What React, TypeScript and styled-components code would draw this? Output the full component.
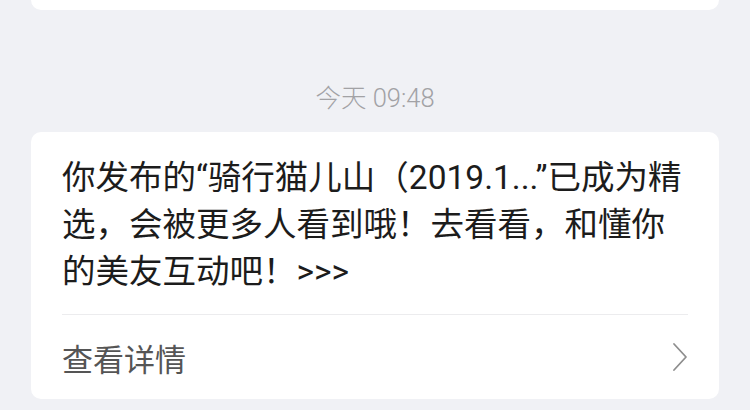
import React from 'react'
import styled, { createGlobalStyle } from 'styled-components'

const GlobalStyle = createGlobalStyle`
html, body {
  margin: 0;
  padding: 0;
  background-color: #f0f1f5;
  font-family: Roboto, "Noto Sans CJK SC", sans-serif;
}
`

const Page = styled.div`
width: 750px;
height: 410px;
overflow: hidden;
padding: 0 31px;
box-sizing: border-box;
display: flex;
flex-direction: column;
`

const PrevCard = styled.div`
height: 10px;
background-color: #ffffff;
border-radius: 0 0 10px 10px;
`

const Time = styled.div`
margin-top: 72px;
height: 32px;
line-height: 32px;
text-align: center;
font-size: 25.5px;
font-weight: 300;
color: #a2a2a5;
`

const Card = styled.div`
margin-top: 18px;
background-color: #ffffff;
border-radius: 10px;
padding: 0 31px;
`

const Body = styled.div`
padding: 22px 0 19px;
font-size: 33.5px;
line-height: 47px;
color: #1c1c1c;
word-break: break-all;
`

const Footer = styled.div`
height: 84px;
border-top: 1px solid #ececee;
display: flex;
align-items: center;
justify-content: space-between;
`

const Detail = styled.span`
font-size: 31px;
color: #555555;
`

const Chevron = styled.svg`
width: 16px;
height: 30px;
margin-right: 0;
`

export default function App() {
  return (
    <>
      <GlobalStyle />
      <Page>
        <PrevCard />
        <Time>今天 09:48</Time>
        <Card>
          <Body>
            你发布的“骑行猫儿山（2019.1...”已成为精选，会被更多人看到哦！去看看，和懂你的美友互动吧！&gt;&gt;&gt;
          </Body>
          <Footer>
            <Detail>查看详情</Detail>
            <Chevron viewBox="0 0 16 30">
              <polyline points="2,2 14,15 2,28" fill="none" stroke="#8e8e8e" strokeWidth="1.8" strokeLinejoin="round" strokeLinecap="round" />
            </Chevron>
          </Footer>
        </Card>
      </Page>
    </>
  )
}
